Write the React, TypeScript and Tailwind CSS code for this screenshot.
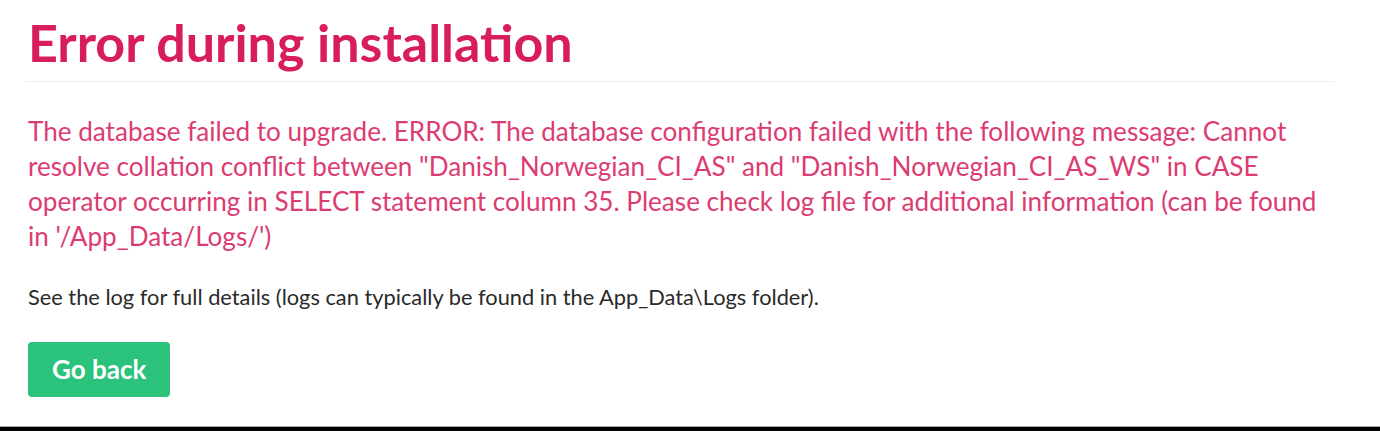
import React from 'react';

const App: React.FC = () => {
    return (
        <div className="h-[431px] w-[1380px] flex flex-col bg-white font-['Lato','Liberation_Sans',sans-serif]">
            <div className="flex-1 pl-[28px] pr-[46px]">
                {/* Title */}
                <h1 className="pt-[12px] pb-[9px] text-[52px] leading-[60px] font-bold text-[#d81e5a] border-b border-[#eeeeee] -ml-[3px] pl-[3px]">
                    Error during installation
                </h1>

                {/* Error message */}
                <p className="mt-[32px] text-[26.1px] leading-[35px] text-[#dc3c71]">
                    The database failed to upgrade. ERROR: The database configuration failed with the following message: Cannot resolve collation conflict between "Danish_Norwegian_CI_AS" and "Danish_Norwegian_CI_AS_WS" in CASE operator occurring in SELECT statement column 35. Please check log file for additional information (can be found in '/App_Data/Logs/')
                </p>

                <p className="mt-[30px] text-[21.8px] leading-[26px] text-[#2a2a2a]">
                    See the log for full details (logs can typically be found in the App_Data\Logs folder).
                </p>

                <button className="mt-[32px] h-[55px] px-[24px] rounded-[4px] bg-[#2bc37c] text-white text-[26px] font-bold">
                    Go back
                </button>
            </div>
            <div className="h-[5px] bg-black border-t border-[#aaaaaa]"></div>
        </div>
    );
};

export default App;
